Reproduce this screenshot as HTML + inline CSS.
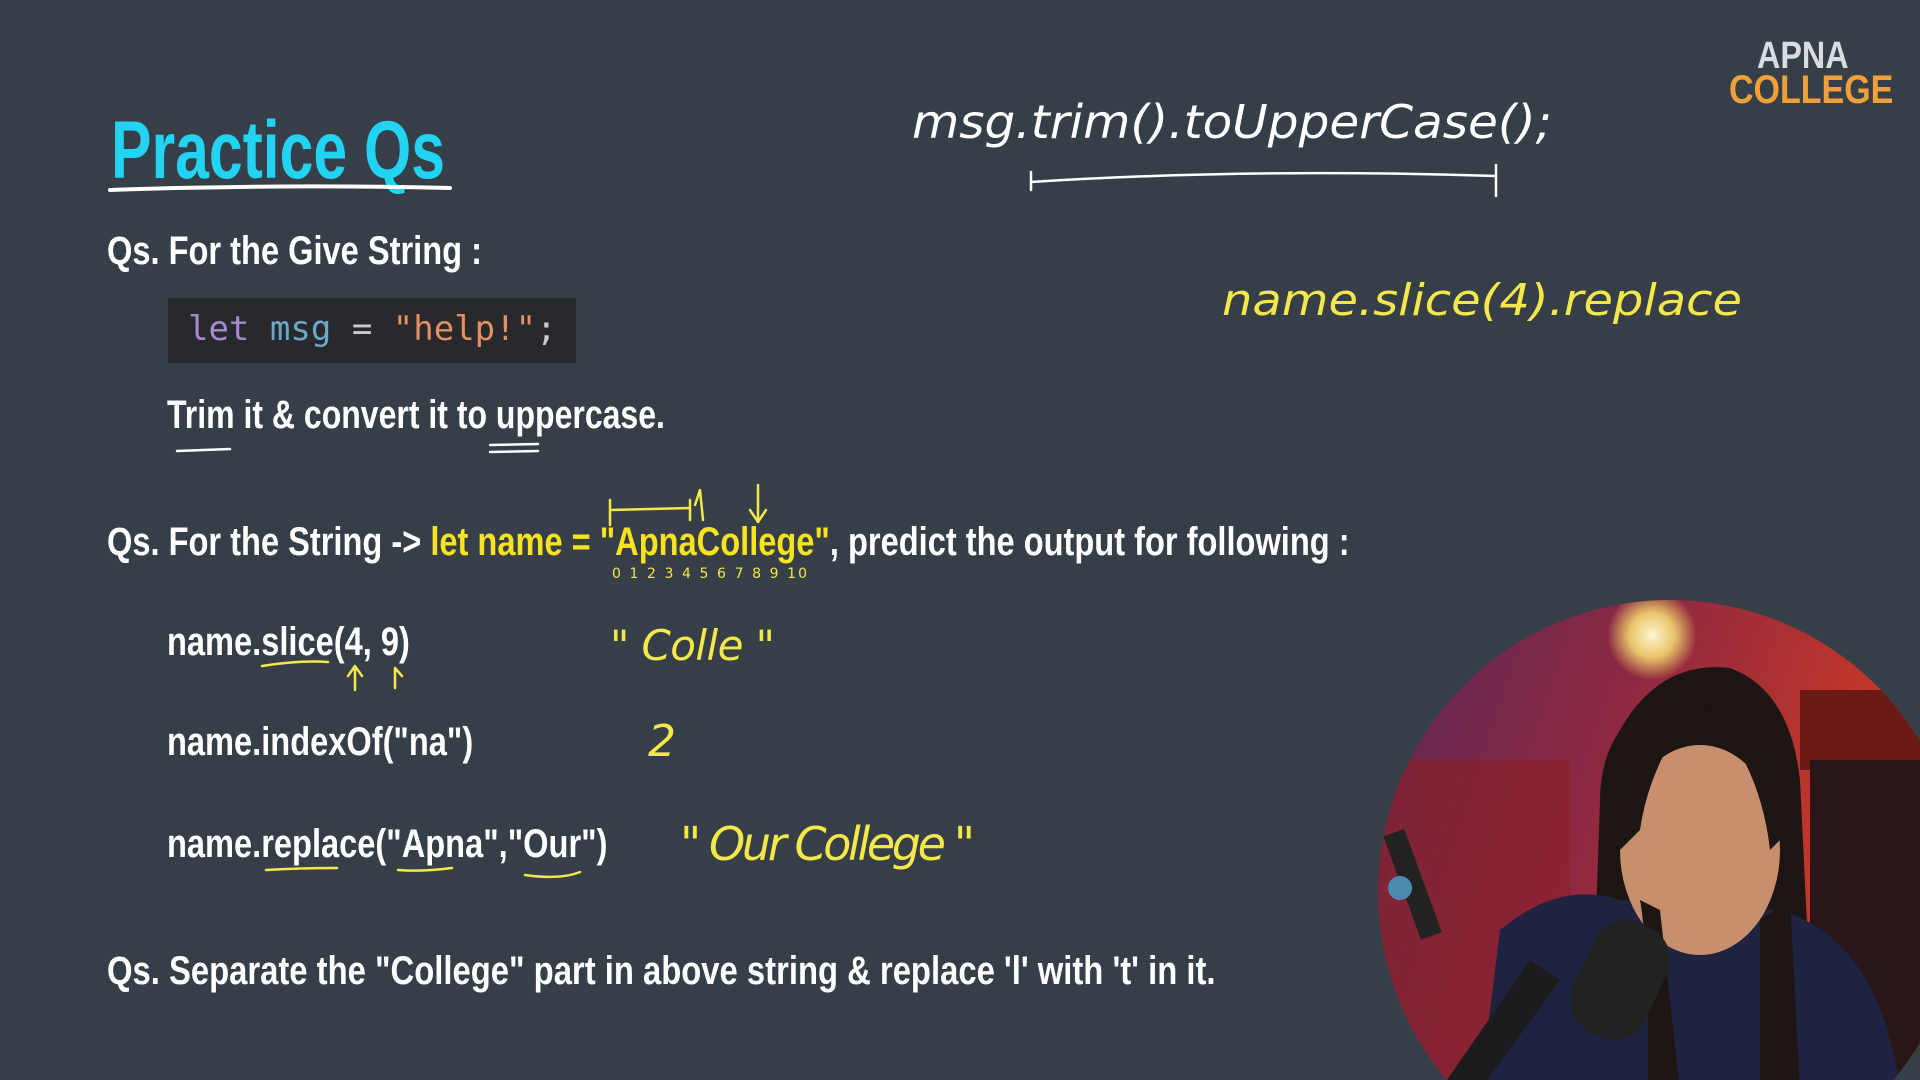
<!DOCTYPE html>
<html><head><meta charset="utf-8"><style>
html,body{margin:0;padding:0;}
body{width:1920px;height:1080px;background:#363e48;position:relative;overflow:hidden;font-family:"Liberation Sans",sans-serif;}
.t{position:absolute;white-space:nowrap;color:#fff;font-weight:bold;line-height:1;transform-origin:0 0;transform:scaleX(0.815);}
.y{color:#f7e41e}
.hw{position:absolute;left:0;top:0}
</style></head><body>
<div class="t" style="left:111px;top:110px;font-size:82px;color:#22d3f2;transform:scaleX(0.74);">Practice Qs</div>
<div class="t" style="left:107px;top:231px;font-size:40px;">Qs. For the Give String :</div>
<div style="position:absolute;left:168px;top:298px;width:408px;height:65px;background:#26282c;"></div>
<div class="t" style="left:188px;top:312px;font-size:34px;font-weight:normal;transform:none;font-family:'DejaVu Sans Mono','Liberation Mono',monospace;"><span style="color:#a88ad0">let</span> <span style="color:#6aa7c8">msg</span> <span style="color:#ccc">=</span> <span style="color:#e48f5e">"help!"</span><span style="color:#ccc">;</span></div>
<div class="t" style="left:167px;top:395px;font-size:40px;transform:scaleX(0.8)">Trim it &amp; convert it to uppercase.</div>
<div class="t" style="left:107px;top:522px;font-size:40px;">Qs. For the String -&gt; <span class="y">let name = "ApnaCollege"</span>, predict the output for following :</div>
<div class="t" style="left:167px;top:622px;font-size:40px;">name.slice(4, 9)</div>
<div class="t" style="left:167px;top:722px;font-size:40px;">name.indexOf("na")</div>
<div class="t" style="left:167px;top:824px;font-size:40px;">name.replace("Apna","Our")</div>
<div class="t" style="left:107px;top:951px;font-size:40px;transform:scaleX(0.82)">Qs. Separate the "College" part in above string &amp; replace 'l' with 't' in it.</div>
<div class="t" style="left:1757px;top:37px;font-size:38px;color:#d9dde2;transform:scaleX(0.85)">APNA</div>
<div class="t" style="left:1729px;top:70px;font-size:40px;color:#eea13b;transform:scaleX(0.85)">COLLEGE</div>

<svg class="hw" width="1920" height="1080" fill="none" stroke-linecap="round" stroke-linejoin="round">
<path d="M110 190 Q280 184 450 188" stroke="#fff" stroke-width="4"/>
<path d="M177 451 L230 449" stroke="#fff" stroke-width="2.5"/>
<path d="M490 445 L538 444 M490 452 L538 451" stroke="#fff" stroke-width="2.5"/>
<path d="M1031 190 L1031 172 M1031 182 Q1250 168 1496 176 M1496 165 L1496 196" stroke="#fff" stroke-width="2.5"/>
<text x="912" y="138" fill="#fff" stroke="none" font-family="DejaVu Sans" font-size="46" font-style="italic" font-weight="200" textLength="640" lengthAdjust="spacingAndGlyphs">msg.trim().toUpperCase();</text>
<text x="1222" y="315" fill="#f4e84a" stroke="none" font-family="DejaVu Sans" font-size="44" font-style="italic" font-weight="200" textLength="520" lengthAdjust="spacingAndGlyphs">name.slice(4).replace</text>
<path d="M610 500 L610 525 M610 510 L690 508 M690 500 L690 520 M695 505 L700 490 L703 520 M758 485 L758 520 M750 510 L758 522 L766 510" stroke="#f4e84a" stroke-width="2.5"/>
<text x="612" y="578" fill="#f4e84a" stroke="none" font-family="DejaVu Sans" font-size="14" textLength="195">0 1 2 3 4 5 6 7 8 9 10</text>
<path d="M262 666 Q300 660 328 662" stroke="#f4e84a" stroke-width="2.5"/>
<path d="M355 690 L355 668 M348 676 L355 666 L362 676 M395 688 L395 668 L402 676" stroke="#f4e84a" stroke-width="2.5"/>
<text x="610" y="660" fill="#f4e84a" stroke="none" font-family="DejaVu Sans" font-size="42" font-style="italic" font-weight="200" textLength="165">" Colle "</text>
<text x="648" y="756" fill="#f4e84a" stroke="none" font-family="DejaVu Sans" font-size="44" font-style="italic" font-weight="200">2</text>
<text x="680" y="860" fill="#f4e84a" stroke="none" font-family="DejaVu Sans" font-size="46" font-style="italic" font-weight="200" textLength="295">" Our College "</text>
<path d="M266 870 Q300 868 337 868 M398 870 Q420 872 452 868 M525 875 Q560 880 580 872" stroke="#f4e84a" stroke-width="2.5"/>
</svg>

<svg style="position:absolute;left:0;top:0" width="1920" height="1080">
<defs>
<clipPath id="c"><circle cx="1670" cy="892" r="292"/></clipPath>
<linearGradient id="bg" x1="0" y1="0" x2="1" y2="0.3"><stop offset="0" stop-color="#5a2a55"/><stop offset="0.45" stop-color="#8a2742"/><stop offset="1" stop-color="#d23a22"/></linearGradient>
<radialGradient id="lamp"><stop offset="0" stop-color="#fff6d0"/><stop offset="0.5" stop-color="#e9c46a"/><stop offset="1" stop-color="#e9c46a" stop-opacity="0"/></radialGradient>
</defs>
<g clip-path="url(#c)">
<rect x="1370" y="590" width="560" height="500" fill="url(#bg)"/>
<rect x="1370" y="760" width="200" height="330" fill="#8a1f28" opacity="0.6"/>
<rect x="1800" y="690" width="130" height="80" fill="#6a1a16"/>
<rect x="1810" y="760" width="120" height="330" fill="#2a1518"/>
<circle cx="1652" cy="635" r="45" fill="url(#lamp)"/>
<path d="M1620 730 Q1660 660 1730 668 Q1790 690 1800 780 L1815 1090 L1590 1090 L1600 800 Q1600 760 1620 730Z" fill="#1d1514"/>
<path d="M1500 930 Q1560 880 1620 900 L1780 910 Q1880 940 1900 1090 L1480 1090Z" fill="#1f2240"/>
<ellipse cx="1700" cy="850" rx="80" ry="105" fill="#c88f6f"/>
<path d="M1620 850 Q1615 760 1660 720 Q1700 700 1700 700 Q1650 760 1640 830Z" fill="#1d1514"/>
<path d="M1700 700 Q1770 740 1780 840 L1770 850 Q1760 760 1700 700Z" fill="#1d1514"/>
<path d="M1648 1090 Q1650 960 1640 900 L1660 910 L1680 1090Z M1760 1090 L1760 920 L1790 900 L1800 1090Z" fill="#1d1514"/>
<rect x="1580" y="920" width="80" height="120" rx="35" fill="#222" transform="rotate(25 1620 980)"/>
<path d="M1440 1090 L1530 960 L1560 980 L1480 1090Z" fill="#1b1b1e"/>
<rect x="1400" y="830" width="22" height="110" fill="#222" transform="rotate(-20 1410 880)"/>
<circle cx="1400" cy="888" r="12" fill="#4d8ab0"/>
</g>
</svg>
</body></html>
